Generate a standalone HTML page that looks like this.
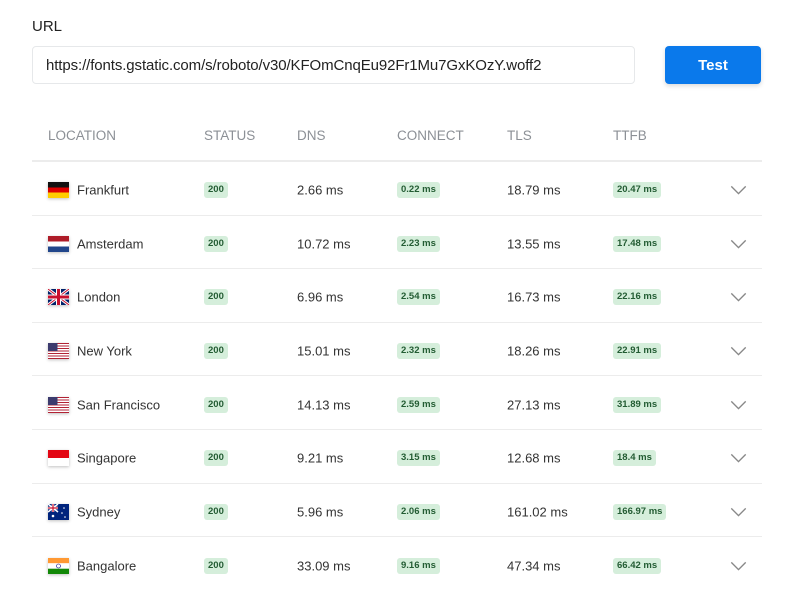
<!DOCTYPE html>
<html><head><meta charset="utf-8"><style>
*{box-sizing:border-box;margin:0;padding:0}
body{width:788px;height:597px;background:#fff;font-family:"Liberation Sans",sans-serif;color:#333;position:relative;overflow:hidden}
.lbl{position:absolute;left:32px;top:18px;font-size:15px;color:#222}
.inp{position:absolute;left:32px;top:46px;width:603px;height:38px;border:1px solid #e6e8ea;border-radius:4px;font-size:15px;color:#222;padding:10px 0 0 13px;letter-spacing:-0.1px}
.btn{position:absolute;left:665px;top:46px;width:96px;height:38px;background:#0a79eb;border-radius:4px;color:#fff;font-weight:bold;font-size:15px;text-align:center;line-height:40px;box-shadow:0 2px 5px rgba(0,0,0,.15)}
.hd{position:absolute;top:128px;font-size:13.5px;color:#8c9096}
.hl{position:absolute;left:32px;top:160px;width:730px;height:2px;background:#ececec}
.row{position:absolute;left:32px;width:730px;height:53.6px;border-bottom:1px solid #ececec;font-size:13px;color:#333}
.row>*{position:absolute;top:calc(50% + 2px);transform:translateY(-50%)}
.flag{left:16px;width:21px;height:16px;overflow:hidden;box-shadow:0 1px 3px rgba(0,0,0,.25)}
.b{background:#d5eedb;color:#235c33;font-weight:bold;font-size:9.5px;border-radius:3px;padding:2px 4px;line-height:12px}
.chev{left:698px;width:17px;height:9px}
</style></head><body>
<div class="lbl">URL</div>
<div class="inp">https://fonts.gstatic.com/s/roboto/v30/KFOmCnqEu92Fr1Mu7GxKOzY.woff2</div>
<div class="btn">Test</div>
<div class="hd" style="left:48px">LOCATION</div>
<div class="hd" style="left:204px">STATUS</div>
<div class="hd" style="left:297px">DNS</div>
<div class="hd" style="left:397px">CONNECT</div>
<div class="hd" style="left:507px">TLS</div>
<div class="hd" style="left:613px">TTFB</div>
<div class="hl"></div>

<div class="row" style="top:162px"><div class="flag" style="background:linear-gradient(#111 33%,#d00 33% 66%,#fc0 66%)"></div><span style="left:45px">Frankfurt</span><span class="b" style="left:172px">200</span><span style="left:265px">2.66 ms</span><span class="b" style="left:365px">0.22 ms</span><span style="left:475px">18.79 ms</span><span class="b" style="left:581px">20.47 ms</span><svg class="chev" viewBox="0 0 18 10"><path d="M1 1l8 8 8-8" fill="none" stroke="#888" stroke-width="1.5"/></svg></div>

<div class="row" style="top:215.6px"><div class="flag" style="background:linear-gradient(#ae1c28 33%,#fff 33% 66%,#21468b 66%)"></div><span style="left:45px">Amsterdam</span><span class="b" style="left:172px">200</span><span style="left:265px">10.72 ms</span><span class="b" style="left:365px">2.23 ms</span><span style="left:475px">13.55 ms</span><span class="b" style="left:581px">17.48 ms</span><svg class="chev" viewBox="0 0 18 10"><path d="M1 1l8 8 8-8" fill="none" stroke="#888" stroke-width="1.5"/></svg></div>

<div class="row" style="top:269.2px"><svg class="flag" viewBox="0 0 21 16"><rect width="21" height="16" fill="#012169"/><path d="M0 0L21 16M21 0L0 16" stroke="#fff" stroke-width="3"/><path d="M0 0L21 16M21 0L0 16" stroke="#c8102e" stroke-width="1"/><path d="M10.5 0v16M0 8h21" stroke="#fff" stroke-width="5"/><path d="M10.5 0v16M0 8h21" stroke="#c8102e" stroke-width="3"/></svg><span style="left:45px">London</span><span class="b" style="left:172px">200</span><span style="left:265px">6.96 ms</span><span class="b" style="left:365px">2.54 ms</span><span style="left:475px">16.73 ms</span><span class="b" style="left:581px">22.16 ms</span><svg class="chev" viewBox="0 0 18 10"><path d="M1 1l8 8 8-8" fill="none" stroke="#888" stroke-width="1.5"/></svg></div>

<div class="row" style="top:322.8px"><div class="flag" style="background:linear-gradient(90deg,#3c3b6e 45%,transparent 45%) 0 0/100% 53% no-repeat,repeating-linear-gradient(#b22234 0 1.23px,#fff 1.23px 2.46px)"></div><span style="left:45px">New York</span><span class="b" style="left:172px">200</span><span style="left:265px">15.01 ms</span><span class="b" style="left:365px">2.32 ms</span><span style="left:475px">18.26 ms</span><span class="b" style="left:581px">22.91 ms</span><svg class="chev" viewBox="0 0 18 10"><path d="M1 1l8 8 8-8" fill="none" stroke="#888" stroke-width="1.5"/></svg></div>

<div class="row" style="top:376.4px"><div class="flag" style="background:linear-gradient(90deg,#3c3b6e 45%,transparent 45%) 0 0/100% 53% no-repeat,repeating-linear-gradient(#b22234 0 1.23px,#fff 1.23px 2.46px)"></div><span style="left:45px">San Francisco</span><span class="b" style="left:172px">200</span><span style="left:265px">14.13 ms</span><span class="b" style="left:365px">2.59 ms</span><span style="left:475px">27.13 ms</span><span class="b" style="left:581px">31.89 ms</span><svg class="chev" viewBox="0 0 18 10"><path d="M1 1l8 8 8-8" fill="none" stroke="#888" stroke-width="1.5"/></svg></div>

<div class="row" style="top:430px"><div class="flag" style="background:linear-gradient(#e30613 50%,#fff 50%)"></div><span style="left:45px">Singapore</span><span class="b" style="left:172px">200</span><span style="left:265px">9.21 ms</span><span class="b" style="left:365px">3.15 ms</span><span style="left:475px">12.68 ms</span><span class="b" style="left:581px">18.4 ms</span><svg class="chev" viewBox="0 0 18 10"><path d="M1 1l8 8 8-8" fill="none" stroke="#888" stroke-width="1.5"/></svg></div>

<div class="row" style="top:483.6px"><svg class="flag" viewBox="0 0 21 16"><rect width="21" height="16" fill="#00247d"/><path d="M0 0L10 8M10 0L0 8" stroke="#fff" stroke-width="1.5"/><path d="M5 0v8M0 4h10" stroke="#fff" stroke-width="2.5"/><path d="M5 0v8M0 4h10" stroke="#c8102e" stroke-width="1.2"/><circle cx="5" cy="12" r="1.3" fill="#fff"/><circle cx="16" cy="4" r=".8" fill="#fff"/><circle cx="14" cy="9" r=".8" fill="#fff"/><circle cx="17" cy="13" r=".8" fill="#fff"/></svg><span style="left:45px">Sydney</span><span class="b" style="left:172px">200</span><span style="left:265px">5.96 ms</span><span class="b" style="left:365px">2.06 ms</span><span style="left:475px">161.02 ms</span><span class="b" style="left:581px">166.97 ms</span><svg class="chev" viewBox="0 0 18 10"><path d="M1 1l8 8 8-8" fill="none" stroke="#888" stroke-width="1.5"/></svg></div>

<div class="row" style="top:537.2px;border-bottom:none"><svg class="flag" viewBox="0 0 21 16"><rect width="21" height="5.3" fill="#f93"/><rect y="5.3" width="21" height="5.4" fill="#fff"/><rect y="10.7" width="21" height="5.3" fill="#128807"/><circle cx="10.5" cy="8" r="2" fill="none" stroke="#008" stroke-width=".6"/></svg><span style="left:45px">Bangalore</span><span class="b" style="left:172px">200</span><span style="left:265px">33.09 ms</span><span class="b" style="left:365px">9.16 ms</span><span style="left:475px">47.34 ms</span><span class="b" style="left:581px">66.42 ms</span><svg class="chev" viewBox="0 0 18 10"><path d="M1 1l8 8 8-8" fill="none" stroke="#888" stroke-width="1.5"/></svg></div>
</body></html>
